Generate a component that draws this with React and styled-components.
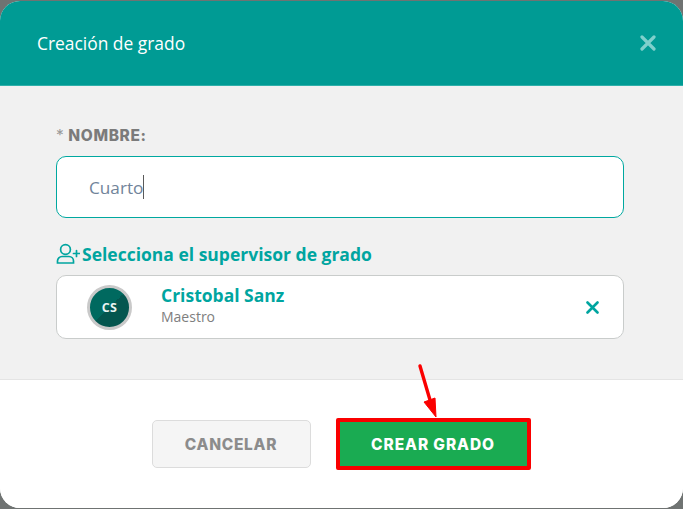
import styled, { createGlobalStyle } from "styled-components"

const GlobalStyle = createGlobalStyle`
    html, body {
        margin: 0;
        padding: 0;
        background: #6f7372;
        font-family: "Open Sans", sans-serif;
    }
`

const Page = styled.div`
    width: 683px;
    height: 509px;
    padding: 1px 0;
    box-sizing: border-box;
    overflow: hidden;
`

const Modal = styled.div`
    position: relative;
    height: 507px;
    display: flex;
    flex-direction: column;
    border-radius: 20px;
    overflow: hidden;
    background: #fff;
`

const Header = styled.div`
    height: 85px;
    flex: none;
    box-sizing: border-box;
    padding: 0 27px 0 37px;
    display: flex;
    align-items: center;
    justify-content: space-between;
    background: #009b94;
    color: #fff;
    font-size: 17.4px;
    border-bottom: 1px solid #2fb0aa;
`

const Body = styled.div`
    height: 294px;
    flex: none;
    box-sizing: border-box;
    padding: 41px 59px 0 56px;
    background: #f1f1f1;
    border-bottom: 1px solid #e4e4e4;
`

const Label = styled.div`
    height: 18px;
    line-height: 18px;
    font-family: "Inter", sans-serif;
    font-size: 15.5px;
    font-weight: 800;
    letter-spacing: 0.6px;
    color: #7b7b7b;
`

const Star = styled.span`
    font-weight: 400;
    color: #9a9a9a;
`

const Field = styled.div`
    height: 62px;
    margin-top: 11px;
    box-sizing: border-box;
    padding-left: 32px;
    display: flex;
    align-items: center;
    background: #fff;
    border: 1px solid #00a8a0;
    border-radius: 10px;
    font-size: 17.2px;
    color: #71849a;
`

const Caret = styled.span`
    width: 1px;
    height: 24px;
    background: #5a5a5a;
`

const SupervisorTitle = styled.div`
    height: 24px;
    margin-top: 24px;
    display: flex;
    align-items: center;
    gap: 2px;
    font-size: 17.5px;
    font-weight: 700;
    color: #00a5a0;
`

const SupervisorCard = styled.div`
    height: 64px;
    margin-top: 9px;
    box-sizing: border-box;
    padding: 0 24px 0 30px;
    display: flex;
    align-items: center;
    background: #fff;
    border: 1px solid #c9cccb;
    border-radius: 10px;
`

const Avatar = styled.div`
    width: 45px;
    height: 45px;
    flex: none;
    box-sizing: border-box;
    display: flex;
    align-items: center;
    justify-content: center;
    border-radius: 50%;
    border: 3px solid #c9c9c9;
    background: linear-gradient(135deg, #00695f 50%, #04564f 50%);
    color: #e9f3f2;
    font-size: 12.5px;
    font-weight: 700;
    letter-spacing: 0.3px;
`

const Person = styled.div`
    margin-left: 29px;
    margin-top: -3px;
    flex: 1;
    display: flex;
    flex-direction: column;
`

const PersonName = styled.span`
    font-size: 17.5px;
    line-height: 22px;
    font-weight: 700;
    color: #00a5a0;
`

const PersonRole = styled.span`
    font-size: 14px;
    line-height: 21px;
    color: #7e7e7e;
`

const Footer = styled.div`
    flex: 1;
    padding-top: 38px;
    box-sizing: border-box;
    display: flex;
    align-items: flex-start;
    justify-content: center;
    gap: 25px;
    padding-right: 1px;
    background: #fff;
`

const Button = styled.div`
    box-sizing: border-box;
    display: flex;
    align-items: center;
    justify-content: center;
    font-family: "Inter", sans-serif;
    font-size: 15.5px;
    font-weight: 800;
`

const CancelButton = styled(Button)`
    width: 159px;
    height: 48px;
    margin-top: 2px;
    background: #f5f5f5;
    border: 1px solid #dcdcdc;
    border-radius: 5px;
    color: #8c8c8c;
    letter-spacing: 0.7px;
`

const CreateButton = styled(Button)`
    width: 195px;
    height: 52px;
    background: #1aab52;
    border: 4px solid #fa0000;
    border-radius: 2px;
    color: #fff;
    letter-spacing: 0.9px;
`

const Arrow = styled.svg`
    position: absolute;
    left: 412px;
    top: 360px;
`

const App = () => {
    return (
        <Page>
            <GlobalStyle />
            <Modal>
                <Header>
                    Creación de grado
                    <svg width="16" height="16" viewBox="0 0 16 16">
                        <path d="M2 2 L14 14 M14 2 L2 14" stroke="#7fd0cc" strokeWidth="3.2" strokeLinecap="round" />
                    </svg>
                </Header>
                <Body>
                    <Label><Star>*</Star> NOMBRE:</Label>
                    <Field>Cuarto<Caret /></Field>
                    <SupervisorTitle>
                        <svg width="24" height="22" viewBox="0 0 24 22" fill="none" stroke="#00a5a0" strokeWidth="1.7" strokeLinecap="round">
                            <circle cx="9.5" cy="6.5" r="4.9" />
                            <path d="M1.5 20 v-2 a4.5 4.5 0 0 1 4.5 -4.5 h7 a4.5 4.5 0 0 1 4.5 4.5 v2 z" />
                            <path d="M17.5 10.5 h6 M20.5 7.5 v6" />
                        </svg>
                        Selecciona el supervisor de grado
                    </SupervisorTitle>
                    <SupervisorCard>
                        <Avatar>CS</Avatar>
                        <Person>
                            <PersonName>Cristobal Sanz</PersonName>
                            <PersonRole>Maestro</PersonRole>
                        </Person>
                        <svg width="13" height="13" viewBox="0 0 13 13">
                            <path d="M1.5 1.5 L11.5 11.5 M11.5 1.5 L1.5 11.5" stroke="#00a5a0" strokeWidth="2.6" strokeLinecap="round" />
                        </svg>
                    </SupervisorCard>
                </Body>
                <Footer>
                    <CancelButton>CANCELAR</CancelButton>
                    <CreateButton>CREAR GRADO</CreateButton>
                </Footer>
                <Arrow width="30" height="58" viewBox="0 0 30 58">
                    <path d="M8 5 L18 39" stroke="#fa0000" strokeWidth="3.4" strokeLinecap="round" />
                    <path d="M24 56 L12 41 L23 37 Z" fill="#fa0000" stroke="#fa0000" strokeWidth="1" />
                </Arrow>
            </Modal>
        </Page>
    )
}

export default App
